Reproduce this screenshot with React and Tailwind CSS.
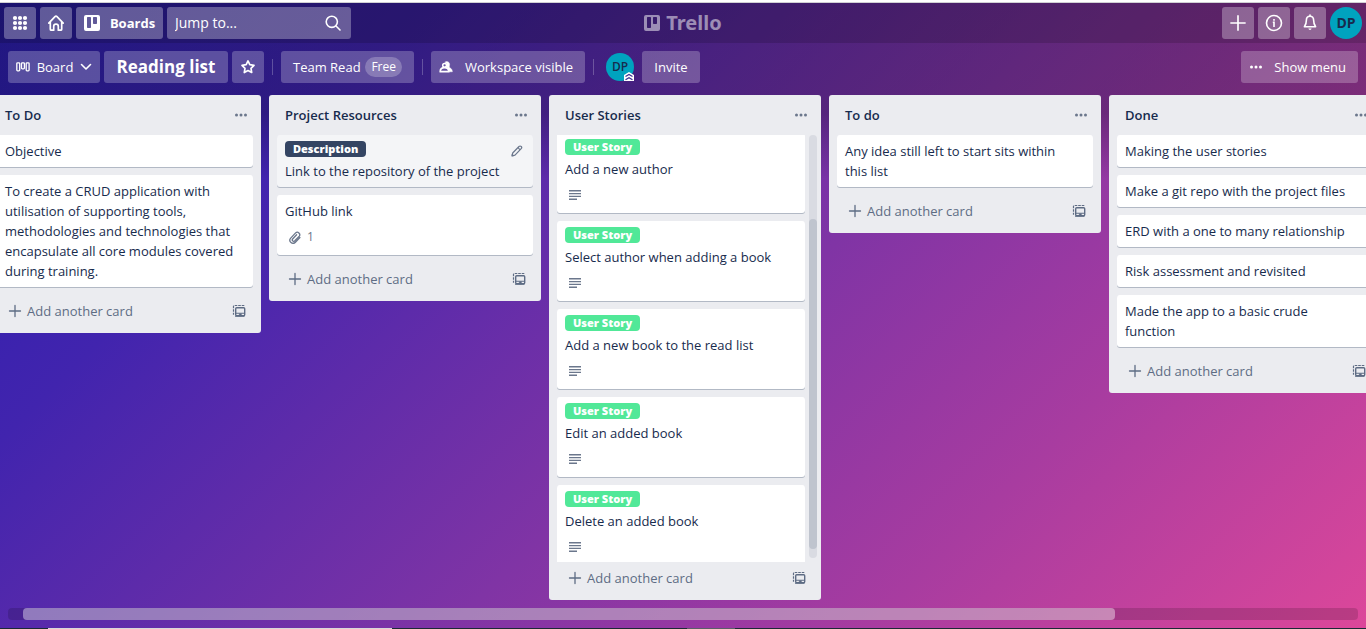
import { useLayoutEffect, useRef } from "react";

const story = (text) => ({ label: "User Story", text, description: true });

const lists = [
  {
    title: "To Do",
    cards: [
      { text: "Objective" },
      {
        text: "To create a CRUD application with utilisation of supporting tools, methodologies and technologies that encapsulate all core modules covered during training.",
      },
    ],
  },
  {
    title: "Project Resources",
    cards: [
      { label: "Description", text: "Link to the repository of the project", hovered: true },
      { text: "GitHub link", attachments: 1 },
    ],
  },
  {
    title: "User Stories",
    scrolled: true,
    cards: [
      story("Add a new author"),
      story("Select author when adding a book"),
      story("Add a new book to the read list"),
      story("Edit an added book"),
      story("Delete an added book"),
    ],
  },
  { title: "To do", cards: [{ text: "Any idea still left to start sits within this list" }] },
  {
    title: "Done",
    cards: [
      { text: "Making the user stories" },
      { text: "Make a git repo with the project files" },
      { text: "ERD with a one to many relationship" },
      { text: "Risk assessment and revisited" },
      { text: "Made the app to a basic crude function" },
    ],
  },
];

function AppsIcon() {
  return (
    <svg width="16" height="16" viewBox="0 0 16 16" fill="currentColor" aria-hidden="true">
      {[3, 8, 13].map((y) => [3, 8, 13].map((x) => <circle key={`${x}-${y}`} cx={x} cy={y} r="2.1" />))}
    </svg>
  );
}

function HomeIcon() {
  return (
    <svg width="18" height="18" viewBox="0 0 18 18" fill="none" stroke="currentColor" strokeWidth="1.7" strokeLinejoin="round" strokeLinecap="round" aria-hidden="true">
      <path d="M1.800 9.200 8 2.600a1.400 1.400 0 0 1 2 0l6.200 6.600M3.300 8v7.200c0 .6.4 1 1 1h2.400v-3.700a2.300 2.300 0 0 1 4.600 0v3.700h2.400c.6 0 1-.4 1-1V8" />
    </svg>
  );
}

function TrelloMark() {
  return (
    <svg className="shrink-0" width="16" height="16" viewBox="0 0 16 16" fill="currentColor" aria-hidden="true">
      <path fillRule="evenodd" d="M2 0h12a2 2 0 0 1 2 2v12a2 2 0 0 1-2 2H2a2 2 0 0 1-2-2V2a2 2 0 0 1 2-2Zm1 2.7v9.6c0 .4.3.7.7.7h2.6c.4 0 .7-.3.7-.7V2.7c0-.4-.3-.7-.7-.7H3.700c-.4 0-.7.3-.7.7Zm6 0v5.600c0 .4.3.7.7.7h2.600c.4 0 .7-.3.7-.7V2.700c0-.4-.3-.7-.7-.7H9.700c-.4 0-.7.3-.7.7Z" />
    </svg>
  );
}

function SearchIcon() {
  return (
    <svg width="16" height="16" viewBox="0 0 16 16" fill="none" stroke="currentColor" strokeWidth="1.600" strokeLinecap="round" aria-hidden="true">
      <circle cx="6.800" cy="6.800" r="5.600" />
      <path d="m11 11 4 4" />
    </svg>
  );
}

function InfoIcon() {
  return (
    <svg width="18" height="18" viewBox="0 0 18 18" fill="none" stroke="currentColor" strokeWidth="1.600" aria-hidden="true">
      <circle cx="9" cy="9" r="7.500" />
      <path d="M7.800 8.300H9V13M9 5v1.700" />
    </svg>
  );
}

function BellIcon() {
  return (
    <svg width="16" height="18" viewBox="0 0 16 18" fill="none" stroke="currentColor" strokeWidth="1.600" strokeLinejoin="round" strokeLinecap="round" aria-hidden="true">
      <path d="M8 2.200C5.700 2.200 4.400 3.800 4.400 6c0 3.500-.6 4.800-2 6.800h11.200c-1.400-2-2-3.300-2-6.800 0-2.200-1.300-3.800-3.600-3.800Z" />
      <path d="M6.400 14.500c.3 1.900 2.900 1.900 3.200 0Z" fill="currentColor" stroke="none" />
      <path d="M8 1v1" />
    </svg>
  );
}

function BoardViewIcon() {
  return (
    <svg width="14" height="10" viewBox="0 0 14 10" fill="none" stroke="currentColor" strokeWidth="1.300" aria-hidden="true">
      <rect x=".8" y=".8" width="2.900" height="8" rx=".8" />
      <rect x="5.500" y=".8" width="2.900" height="6" rx=".8" />
      <rect x="10.200" y=".8" width="2.900" height="8" rx=".8" />
    </svg>
  );
}

function ChevronDown() {
  return (
    <svg width="12" height="8" viewBox="0 0 12 8" fill="none" stroke="currentColor" strokeWidth="1.600" strokeLinecap="round" strokeLinejoin="round" aria-hidden="true">
      <path d="M1.500 1.500 6 6l4.500-4.500" />
    </svg>
  );
}

function StarIcon() {
  return (
    <svg width="16" height="16" viewBox="0 0 16 16" fill="none" stroke="currentColor" strokeWidth="1.700" strokeLinejoin="round" aria-hidden="true">
      <path d="m8 1.900 1.800 3.800 4.200.6-3 3 .7 4.200L8 11.500l-3.700 2 .7-4.200-3-3 4.200-.6Z" />
    </svg>
  );
}

function WorkspaceIcon() {
  return (
    <svg width="14" height="12" viewBox="0 0 14 12" fill="none" stroke="currentColor" strokeLinejoin="round" aria-hidden="true">
      <path d="M5.800 1.300C7-.2 10.400.3 10.600 3.200c.1 1.500-.5 2.300-.2 3 .4.800 3 1.300 3 4.600h-3.200L8.500 7 7.600 5.800c.6-1.800.1-3.500-1.800-4.500Z" fill="currentColor" strokeWidth=".4" />
      <circle cx="5.600" cy="4.300" r="1.900" strokeWidth="1.500" />
      <path d="M1.200 10.700c0-2.700 1.600-4 4.300-4s4.300 1.300 4.300 4Z" strokeWidth="1.700" />
    </svg>
  );
}

function Dots() {
  return (
    <svg width="14" height="4" viewBox="0 0 14 4" fill="currentColor" aria-hidden="true">
      <circle cx="2.500" cy="2" r="1.500" />
      <circle cx="7" cy="2" r="1.500" />
      <circle cx="11.500" cy="2" r="1.500" />
    </svg>
  );
}

function PlusIcon({ size }) {
  return (
    <svg width={size} height={size} viewBox="0 0 14 14" fill="none" stroke="currentColor" strokeWidth="1.300" strokeLinecap="round" aria-hidden="true">
      <path d="M7 1.500v11M1.500 7h11" />
    </svg>
  );
}

function TemplateIcon() {
  return (
    <svg width="14" height="14" viewBox="0 0 14 14" fill="none" stroke="currentColor" aria-hidden="true">
      <path d="M12.300 1.500H2.300a.8.8 0 0 0-.8.800v8.500" strokeWidth="1.200" strokeDasharray="2.600 .9" />
      <rect x="3.700" y="3.700" width="9" height="8" rx="1" strokeWidth="1.400" />
      <path d="M3.700 9.300h9M3 12.300h9.500" strokeWidth="1.100" />
      <path d="M7.300 9.800h2v2h-2Z" fill="currentColor" strokeWidth=".6" />
    </svg>
  );
}

function PencilIcon() {
  return (
    <svg width="12" height="12" viewBox="0 0 12 12" fill="none" stroke="currentColor" strokeWidth="1.200" strokeLinejoin="round" aria-hidden="true">
      <path d="M1 11 1.700 8 8 1.500c.700-.7 1.500-.7 2.200 0 .7.700.7 1.500 0 2.200L4 10.200ZM7 2.700l2.100 2.100" />
      <path d="M1 11v-2l2 1.700Z" fill="currentColor" strokeWidth=".5" />
    </svg>
  );
}

function ClipIcon() {
  return (
    <svg width="12" height="13" viewBox="0 0 12 13" fill="none" stroke="currentColor" strokeWidth="1.300" strokeLinecap="round" aria-hidden="true">
      <path d="m10.900 6.500-4.500 4.700a3.100 3.100 0 0 1-4.700-4.100l4.900-5.200a2.500 2.500 0 0 1 3.700 3.300L5.800 9.800A1.400 1.400 0 0 1 3.600 8l4-4.200" />
    </svg>
  );
}

function DescriptionIcon() {
  return (
    <svg width="12" height="10" viewBox="0 0 12 10" fill="currentColor" aria-label="This card has a description" role="img">
      <path d="M0 0h12v1.500H0ZM0 3h12v1.300H0ZM0 5.700h12V7H0ZM0 8.500h8V10H0Z" />
    </svg>
  );
}

function AdminBadge() {
  return (
    <svg className="absolute right-0 bottom-0" width="10" height="9" viewBox="0 0 10 9" aria-hidden="true">
      <path d="M0 3 5 0l5 3v6H0Z" fill="#fff" />
      <path d="m1.500 4.500 3.500-2 3.500 2M1.500 7.800l3.500-2 3.500 2" fill="none" stroke="#403294" strokeWidth="1.300" />
    </svg>
  );
}

const navButton = "flex h-8 shrink-0 items-center justify-center rounded-[3px] bg-white/30 text-white";
const boardButton = "flex h-8 shrink-0 items-center rounded-[3px] bg-white/24 whitespace-nowrap text-white";

function TopBar() {
  return (
    <header className="grid h-10 shrink-0 grid-cols-[1fr_auto_1fr] items-center bg-black/15 px-1">
      <nav className="flex gap-1">
        <button className={`${navButton} w-8`} aria-label="Apps"><AppsIcon /></button>
        <a href="#home" className={`${navButton} w-8`} aria-label="Home"><HomeIcon /></a>
        <button className={`${navButton} w-[87px] gap-2.5 font-bold`}><TrelloMark />Boards</button>
        <label className={`${navButton} w-[184px] px-2`}>
          <input type="text" placeholder="Jump to..." aria-label="Jump to" className="min-w-0 flex-1 bg-transparent text-sm text-white outline-none placeholder:text-white" />
          <span className="px-0.5"><SearchIcon /></span>
        </label>
      </nav>
      <a href="#trello" className="flex items-center gap-1.5 font-['Noto_Sans',sans-serif] text-xl leading-8 font-bold text-white/50">
        <TrelloMark />Trello
      </a>
      <div className="flex justify-end gap-1">
        <button className={`${navButton} w-8`} aria-label="Create"><PlusIcon size={18} /></button>
        <button className={`${navButton} w-8`} aria-label="Information"><InfoIcon /></button>
        <button className={`${navButton} w-8`} aria-label="Notifications"><BellIcon /></button>
        <button className="size-8 rounded-full bg-[#00a3bf] text-sm font-bold text-[#172b4d]">DP</button>
      </div>
    </header>
  );
}

function Divider() {
  return <span className="mx-1 h-4 w-px shrink-0 bg-white/24" />;
}

function BoardHeader() {
  return (
    <div className="flex h-[52px] shrink-0 items-start gap-1 px-2 pt-2">
      <div className="flex flex-1 items-center gap-1">
        <button className={`${boardButton} w-[92px] justify-between px-2`}><BoardViewIcon />Board<ChevronDown /></button>
        <h1 className={`${boardButton} w-[124px] justify-center text-[17px] font-bold`}>Reading list</h1>
        <button className={`${boardButton} w-8 justify-center`} aria-label="Star board"><StarIcon /></button>
        <Divider />
        <button className={`${boardButton} w-[133px] justify-between px-3`}>
          Team Read
          <span className="rounded-full bg-white/24 px-1.5 text-xs leading-5">Free</span>
        </button>
        <Divider />
        <button className={`${boardButton} w-[154px] justify-between pr-3 pl-2`}><WorkspaceIcon />Workspace visible</button>
        <Divider />
        <button className="relative ml-1 size-7 shrink-0 rounded-full bg-[#00a3bf] text-xs font-semibold text-[#172b4d]">DP<AdminBadge /></button>
        <button className={`${boardButton} ml-1 w-[58px] justify-center`}>Invite</button>
      </div>
      <button className={`${boardButton} w-[117px] justify-between pr-3 pl-2`}><Dots />Show menu</button>
    </div>
  );
}

function Card({ card }) {
  return (
    <li className={`flex shrink-0 flex-col items-start rounded-[3px] px-2 py-1.5 shadow-[0_1px_0_#091e4240] ${card.hovered ? "bg-[#f4f5f7]" : "bg-white"}`}>
      {card.label && (
        <div className="mb-1 flex h-4 w-full items-start justify-between">
          <span className={`h-4 rounded px-2 text-[11px] leading-4 font-extrabold text-white ${card.description ? "bg-[#51e898]" : "bg-[#344563]"}`}>{card.label}</span>
          {card.hovered && <button className="mt-1 mr-0.5 h-3 text-[#6b778c]" aria-label="Edit card"><PencilIcon /></button>}
        </div>
      )}
      <a href="#card" className="pr-2 leading-5">{card.text}</a>
      {(card.description || card.attachments) && (
        <div className="flex h-7 items-center gap-1.5 px-1 pt-1 text-xs text-[#6b778c]">
          {card.description ? <DescriptionIcon /> : <><ClipIcon />{card.attachments}</>}
        </div>
      )}
    </li>
  );
}

function List({ list }) {
  return (
    <section className="flex max-h-full w-[272px] shrink-0 flex-col rounded-[3px] bg-[#ebecf0]">
      <div className="flex h-10 shrink-0 items-center justify-between pr-3 pl-4">
        <h2 className="font-semibold">{list.title}</h2>
        <button className="px-px text-[#6b778c]" aria-label="List actions"><Dots /></button>
      </div>
      {list.scrolled ? (
        <div className="flex min-h-0 gap-1 pr-1 pl-2">
          <ul className="flex min-w-0 flex-1 flex-col gap-2 overflow-hidden *:first:-mt-0.5">
            {list.cards.map((card) => <Card key={card.text} card={card} />)}
          </ul>
          <div className="mb-1 flex w-2 flex-col rounded bg-[#091e42]/8">
            <span className="flex-[84]" />
            <span className="flex-[330] rounded bg-[#bfc4ce]" />
            <span className="flex-[9]" />
          </div>
        </div>
      ) : (
        <ul className="flex flex-col gap-2 px-2 pb-2">
          {list.cards.map((card) => <Card key={card.text} card={card} />)}
        </ul>
      )}
      <div className="mx-2 mt-0.5 mb-2 flex h-7 shrink-0 items-center justify-between pr-[7px] pl-[11px] text-[#5e6c84]">
        <button className="flex items-center gap-[5px] leading-5"><PlusIcon size={14} />Add another card</button>
        <button aria-label="Create from template"><TemplateIcon /></button>
      </div>
    </section>
  );
}

export default function App() {
  const board = useRef(null);
  useLayoutEffect(() => {
    board.current.scrollLeft = 19;
  }, []);

  return (
    <div className="flex h-screen flex-col overflow-hidden bg-[#1b2a35] font-['Open_Sans','Segoe_UI',sans-serif] text-[13px] leading-5 text-[#172b4d]">
      <div className="h-[3px] shrink-0 border-b border-[#d0d0d4] bg-white" />
      <div className="flex min-h-0 flex-1 flex-col bg-[linear-gradient(135deg,#2a1eae_0%,#4124ae_22%,#8034a5_54%,#a83ca0_75%,#dc479a_100%)]">
        <div className="flex min-h-0 flex-1 flex-col bg-[linear-gradient(to_bottom,rgba(0,0,0,.25)_0px,rgba(0,0,0,.25)_110px,transparent_176px)]">
          <TopBar />
          <BoardHeader />
          <main ref={board} className="flex min-h-0 flex-1 items-start gap-2 overflow-x-hidden pl-2 pb-2">
            {lists.map((list) => <List key={list.title} list={list} />)}
          </main>
          <div className="mx-2 mb-2 flex h-3 shrink-0 rounded bg-black/15">
            <span className="flex-[15]" />
            <span className="flex-[1092] rounded bg-white/40" />
            <span className="flex-[243]" />
          </div>
        </div>
      </div>
      <div className="flex h-px shrink-0">
        <span className="flex-[48]" />
        <span className="flex-[344] bg-[#d8d8d8]" />
        <span className="flex-[295]" />
        <span className="flex-[48] bg-[#5a5f68]" />
        <span className="flex-[631]" />
      </div>
    </div>
  );
}
